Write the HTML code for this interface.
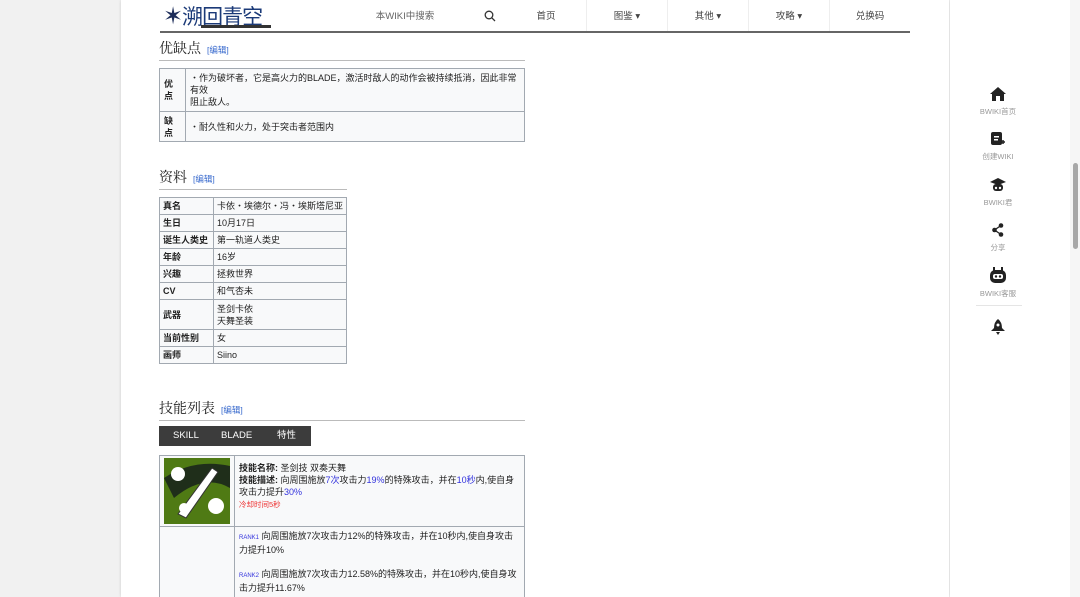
<!DOCTYPE html>
<html><head><meta charset="utf-8"><style>
*{margin:0;padding:0;box-sizing:border-box}
html,body{width:1080px;height:597px;overflow:hidden}
body{background:#f1f1f1;font-family:"Liberation Sans","Noto Sans CJK SC",sans-serif;font-size:9px;color:#222;position:relative}
.page{position:absolute;left:121px;top:0;width:828px;height:597px;background:#fff;box-shadow:0 0 3px rgba(0,0,0,.15)}
.rail{position:absolute;left:950px;top:0;width:120px;height:597px;background:#fff}
.sb{position:absolute;left:1070px;top:0;width:10px;height:597px;background:#f6f6f6}
.thumb{position:absolute;left:3px;top:163px;width:5px;height:86px;background:#a8a8a8;border-radius:3px}
.a{position:absolute}
.nav{position:absolute;top:0;height:31px;line-height:33px;font-size:9.5px;color:#444;text-align:center}
.sep{position:absolute;top:0;width:1px;height:31px;background:#eee}
h2{position:absolute;font-weight:normal;font-size:14px;color:#222;font-family:"Liberation Serif","Noto Serif CJK SC",serif;border-bottom:1px solid #bbb;padding-bottom:2px}
h2 span{font-size:8.5px;color:#3366cc;font-family:"Liberation Sans","Noto Sans CJK SC",sans-serif;margin-left:6px}
table{position:absolute;border-collapse:collapse;background:#f8f9fa}
td{border:1px solid #a2a9b1;padding:1px 4px;font-size:9px;line-height:12px;vertical-align:middle}
td.h{font-weight:bold}
.nw td{white-space:nowrap;padding:1px 3px}
.ic{text-align:center;font-size:7.5px;color:#999;position:absolute;width:60px;left:968px}
.b{color:#3333dd}
</style></head><body>
<div class="page"></div>
<div class="rail"></div>
<div class="sb"><div class="thumb"></div></div>

<div class="a" style="left:163px;top:0;font-size:21px;color:#1b3a78;font-family:'Noto Sans CJK SC',sans-serif;line-height:28px;letter-spacing:-1px"><span style="color:#1d2d5a;font-size:24px">✶</span>溯回青空</div>
<div class="a" style="left:201px;top:25px;width:70px;height:3px;background:#333"></div>
<div class="nav" style="left:360px;width:90px;color:#666">本WIKI中搜索</div>
<svg class="a" style="left:484px;top:10px" width="12" height="12" viewBox="0 0 12 12"><circle cx="5" cy="5" r="3.8" fill="none" stroke="#333" stroke-width="1.3"/><line x1="7.8" y1="7.8" x2="11" y2="11" stroke="#333" stroke-width="1.3"/></svg>
<div class="nav" style="left:506px;width:80px">首页</div>
<div class="sep" style="left:586px"></div>
<div class="nav" style="left:587px;width:80px">图鉴 ▾</div>
<div class="sep" style="left:667px"></div>
<div class="nav" style="left:668px;width:80px">其他 ▾</div>
<div class="sep" style="left:748px"></div>
<div class="nav" style="left:749px;width:80px">攻略 ▾</div>
<div class="sep" style="left:829px"></div>
<div class="nav" style="left:830px;width:80px">兑换码</div>
<div class="a" style="left:160px;top:31px;width:750px;height:2px;background:#666"></div>

<h2 style="left:159px;top:38px;width:366px">优缺点<span>[编辑]</span></h2>
<table style="left:159px;top:68px;width:366px">
<tr style="height:43px"><td class="h" style="width:26px;padding:0 4px">优<br>点</td><td>・作为破坏者，它是高火力的BLADE，激活时敌人的动作会被持续抵消，因此非常有效<br>阻止敌人。</td></tr>
<tr style="height:30px"><td class="h" style="padding:0 4px">缺<br>点</td><td>・耐久性和火力，处于突击者范围内</td></tr>
</table>

<h2 style="left:159px;top:167px;width:188px">资料<span>[编辑]</span></h2>
<table class="nw" style="left:159px;top:197px;width:188px">
<tr style="height:17px"><td class="h" style="width:54px">真名</td><td>卡依・埃德尔・冯・埃斯塔尼亚</td></tr>
<tr style="height:17px"><td class="h">生日</td><td>10月17日</td></tr>
<tr style="height:17px"><td class="h">诞生人类史</td><td>第一轨道人类史</td></tr>
<tr style="height:17px"><td class="h">年龄</td><td>16岁</td></tr>
<tr style="height:17px"><td class="h">兴趣</td><td>拯救世界</td></tr>
<tr style="height:17px"><td class="h">CV</td><td>和气杏未</td></tr>
<tr style="height:30px"><td class="h">武器</td><td>圣剑卡依<br>天舞圣装</td></tr>
<tr style="height:17px"><td class="h">当前性别</td><td>女</td></tr>
<tr style="height:17px"><td class="h">画师</td><td>Siino</td></tr>
</table>

<h2 style="left:159px;top:398px;width:366px">技能列表<span>[编辑]</span></h2>
<div class="a" style="left:159px;top:426px;width:152px;height:20px;background:#3c3c3c;color:#fff;font-size:9.5px;line-height:20px">
<span class="a" style="left:14px">SKILL</span><span class="a" style="left:62px">BLADE</span><span class="a" style="left:118px">特性</span></div>
<table style="left:159px;top:455px;width:366px">
<tr style="height:70px"><td style="width:74px;padding:2px 4px;line-height:0"><svg width="66" height="66" viewBox="0 0 66 66"><rect width="66" height="66" fill="#4f7a14"/><path d="M0 20 Q30 0 66 8 L66 30 Q40 15 10 40Z" fill="#1f2e1a"/><path d="M14 56 L48 10 L54 14 L22 60Z" fill="#fff" stroke="#333"/><circle cx="14" cy="16" r="7" fill="#fff"/><circle cx="52" cy="48" r="8" fill="#fff"/><circle cx="20" cy="50" r="5" fill="#fff"/></svg></td>
<td style="vertical-align:top;padding-top:6px"><b>技能名称:</b> 圣剑技 双奏天舞<br><b>技能描述:</b> 向周围施放<span class="b">7次</span>攻击力<span class="b">19%</span>的特殊攻击，并在<span class="b">10秒</span>内,使自身攻击力提升<span class="b">30%</span><br><span style="color:#e33;font-size:7.5px">冷却时间5秒</span></td></tr>
<tr style="height:80px"><td></td><td style="vertical-align:top;padding-top:3px"><span class="b" style="font-size:6px">RANK1</span> 向周围施放7次攻击力12%的特殊攻击，并在10秒内,使自身攻击力提升10%<br><br><span class="b" style="font-size:6px">RANK2</span> 向周围施放7次攻击力12.58%的特殊攻击，并在10秒内,使自身攻击力提升11.67%</td></tr>
</table>

<svg class="a" style="left:990px;top:87px" width="16" height="14" viewBox="0 0 16 14"><path d="M8 0 L16 7 L14 7 L14 14 L10 14 L10 9 L6 9 L6 14 L2 14 L2 7 L0 7Z" fill="#222"/></svg>
<div class="ic" style="top:106px">BWIKI首页</div>
<svg class="a" style="left:991px;top:132px" width="14" height="14" viewBox="0 0 14 14"><rect x="0" y="0" width="11" height="13" rx="2" fill="#222"/><rect x="3" y="4" width="5" height="1.5" fill="#fff"/><rect x="3" y="7" width="4" height="1.5" fill="#fff"/><path d="M10 10h4M12 8v4" stroke="#222" stroke-width="1.5"/></svg>
<div class="ic" style="top:151px">创建WIKI</div>
<svg class="a" style="left:990px;top:178px" width="16" height="14" viewBox="0 0 16 14"><path d="M0 4 L8 0 L16 4 L8 7Z" fill="#222"/><rect x="3" y="6" width="10" height="7" rx="3" fill="#222"/><circle cx="6" cy="10" r="1.2" fill="#fff"/><circle cx="10" cy="10" r="1.2" fill="#fff"/></svg>
<div class="ic" style="top:197px">BWIKI君</div>
<svg class="a" style="left:992px;top:223px" width="12" height="14" viewBox="0 0 12 14"><circle cx="9" cy="2.5" r="2.3" fill="#222"/><circle cx="2.5" cy="7" r="2.3" fill="#222"/><circle cx="9" cy="11.5" r="2.3" fill="#222"/><path d="M9 2.5L2.5 7L9 11.5" stroke="#222" stroke-width="1.3" fill="none"/></svg>
<div class="ic" style="top:242px">分享</div>
<svg class="a" style="left:989px;top:267px" width="18" height="17" viewBox="0 0 18 17"><rect x="1" y="3" width="16" height="13" rx="5" fill="#222"/><rect x="4" y="7" width="10" height="5" rx="2" fill="#fff"/><circle cx="7" cy="9.5" r="1.2" fill="#222"/><circle cx="11" cy="9.5" r="1.2" fill="#222"/><rect x="4" y="0" width="2" height="4" fill="#222"/><rect x="12" y="0" width="2" height="4" fill="#222"/></svg>
<div class="ic" style="top:288px">BWIKI客服</div>
<div class="a" style="left:976px;top:305px;width:46px;height:1px;background:#e5e5e5"></div>
<svg class="a" style="left:991px;top:319px" width="14" height="16" viewBox="0 0 14 16"><path d="M7 0 Q11 3 11 9 L14 12 L10 12 L4 12 L0 12 L3 9 Q3 3 7 0Z" fill="#222"/><circle cx="7" cy="6" r="1.5" fill="#fff"/><path d="M5 13h4l-2 3z" fill="#222"/></svg>
</body></html>
